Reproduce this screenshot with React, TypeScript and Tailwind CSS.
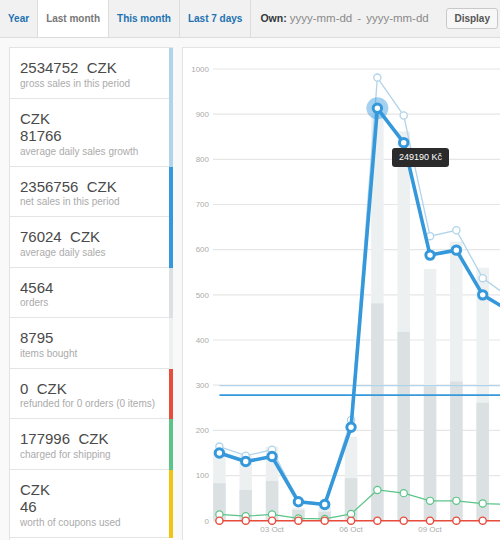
import React from "react";

const X0 = 219.4;
const DX = 26.33;
const Y0 = 520.7;
const K = 0.4517;

const px = (i: number) => X0 + DX * i;
const py = (v: number) => Y0 - v * K;

const itemsSold = [157, 145, 164, 28, 30, 186, 902, 862, 557, 618, 560];
const orders = [83, 68, 88, 24, 20, 94, 481, 418, 297, 308, 261];
const gross = [164, 144, 157, 44, 38, 223, 981, 897, 630, 643, 537, 495];
const net = [150, 131, 142, 42, 36, 207, 913, 837, 588, 599, 500, 465];
const shipping = [14, 10, 14, 5, 4, 15, 68, 61, 44, 44, 38, 36];
const refunds = [0, 0, 0, 0, 0, 0, 0, 0, 0, 0, 0, 0];

const toPoints = (vals: number[]) => vals.map((v, i) => `${px(i)},${py(v)}`).join(" ");

const legend = [
  { value: ["2534752\u00a0\u00a0CZK"], label: "gross sales in this period", color: "border-r-[#b1d4ea]" },
  { value: ["CZK", "81766"], label: "average daily sales growth", color: "border-r-[#b1d4ea]" },
  { value: ["2356756\u00a0\u00a0CZK"], label: "net sales in this period", color: "border-r-[#3498db]" },
  { value: ["76024\u00a0\u00a0CZK"], label: "average daily sales", color: "border-r-[#3498db]" },
  { value: ["4564"], label: "orders", color: "border-r-[#dbe1e3]" },
  { value: ["8795"], label: "items bought", color: "border-r-[#ecf0f1]" },
  { value: ["0\u00a0\u00a0CZK"], label: "refunded for 0 orders (0 items)", color: "border-r-[#e74c3c]" },
  { value: ["177996\u00a0\u00a0CZK"], label: "charged for shipping", color: "border-r-[#5cc488]" },
  { value: ["CZK", "46"], label: "worth of coupons used", color: "border-r-[#f1c40f]" },
];

function RangeTabs() {
  const tabs = ["Year", "Last month", "This month", "Last 7 days"];
  return (
    <div className="flex h-[38px] w-full items-stretch whitespace-nowrap border-b border-[#dcdcdc] bg-[#f1f1f1] font-['Liberation_Sans',Arial,sans-serif] text-[10px] font-bold">
      {tabs.map((t) => (
        <div
          key={t}
          className={
            t === "Last month"
              ? "flex shrink-0 items-center border-r border-[#dcdcdc] bg-white px-[8px] text-[#777]"
              : "flex shrink-0 items-center border-r border-[#dcdcdc] px-[8px] text-[#2271b1]"
          }
        >
          {t}
        </div>
      ))}
      <div className="flex min-w-0 flex-1 items-center pl-[9px] pr-[2px]">
        <span className="mr-[3px] text-[10.5px] text-[#32373c]">Own:</span>
        <span className="text-[11.5px] font-normal text-[#8a8a8a]">yyyy-mm-dd</span>
        <span className="mx-[5px] text-[11.5px] font-normal text-[#8a8a8a]">-</span>
        <span className="text-[11.5px] font-normal text-[#8a8a8a]">yyyy-mm-dd</span>
        <button className="ml-auto h-[21px] shrink-0 rounded-[3px] border border-[#c9c9c9] bg-[#f7f7f7] px-[7px] text-[10px] font-bold text-[#555]">
          Display
        </button>
      </div>
    </div>
  );
}

function Legend() {
  return (
    <ul className="w-[164px] shrink-0 border-l border-t border-[#e3e3e3] bg-white font-['Liberation_Sans',Arial,sans-serif]">
      {legend.map((item) => (
        <li
          key={item.label}
          className={`border-r-4 ${item.color} px-[10px] pb-[9px] pt-[11px] shadow-[inset_0_-1px_0_0_#e4e4e4]`}
        >
          {item.value.map((v) => (
            <div key={v} className="text-[15px] leading-[17.5px] text-[#4a4a4a]">
              {v}
            </div>
          ))}
          <div className="text-[10px] leading-[13px] text-[#ababab]">{item.label}</div>
        </li>
      ))}
    </ul>
  );
}

function Chart() {
  const ticks = [0, 100, 200, 300, 400, 500, 600, 700, 800, 900, 1000];
  return (
    <div className="relative flex-1 overflow-hidden border-l border-t border-[#e3e3e3] bg-white">
      <svg width={317} height={492} viewBox="183 48 317 492" className="block font-['Liberation_Sans',Arial,sans-serif]">
        {ticks.map((t) => (
          <g key={t}>
            <line x1={213} x2={500} y1={py(t)} y2={py(t)} stroke="#e6e6e6" strokeWidth={1.2} />
            <text x={209} y={py(t) + 2.8} textAnchor="end" fontSize={8} fill="#acacac">
              {t}
            </text>
          </g>
        ))}
        {itemsSold.map((v, i) => (
          <rect key={`a${i}`} x={px(i) - 6.25} y={py(v)} width={12.5} height={Y0 - py(v)} fill="#ecf0f1" />
        ))}
        {orders.map((v, i) => (
          <rect key={`b${i}`} x={px(i) - 6.25} y={py(v)} width={12.5} height={Y0 - py(v)} fill="#dbe1e3" />
        ))}
        {[
          ["03 Oct", 2],
          ["06 Oct", 5],
          ["09 Oct", 8],
        ].map(([l, i]) => (
          <text key={l} x={px(i as number)} y={532} textAnchor="middle" fontSize={8} fill="#acacac">
            {l}
          </text>
        ))}
        <line x1={X0} x2={500} y1={py(299)} y2={py(299)} stroke="#b1d4ea" strokeWidth={1.2} />
        <line x1={X0} x2={500} y1={py(278)} y2={py(278)} stroke="#3498db" strokeWidth={1.6} />

        <polyline points={toPoints(shipping)} fill="none" stroke="#5cc488" strokeWidth={1.2} />
        {shipping.map((v, i) => (
          <circle key={`s${i}`} cx={px(i)} cy={py(v)} r={3.6} fill="#fff" stroke="#5cc488" strokeWidth={1.2} />
        ))}
        <polyline points={toPoints(refunds)} fill="none" stroke="#e74c3c" strokeWidth={1.5} />
        {refunds.map((v, i) => (
          <circle key={`r${i}`} cx={px(i)} cy={py(v)} r={3.6} fill="#fff" stroke="#e74c3c" strokeWidth={1.4} />
        ))}
        <polyline points={toPoints(gross)} fill="none" stroke="#b1d4ea" strokeWidth={1.3} />
        {gross.map((v, i) => (
          <circle key={`g${i}`} cx={px(i)} cy={py(v)} r={3.6} fill="#fff" stroke="#b1d4ea" strokeWidth={1.3} />
        ))}
        <polyline points={toPoints(net)} fill="none" stroke="#3498db" strokeWidth={3.6} strokeLinejoin="round" />
        <circle cx={px(6)} cy={py(913)} r={11} fill="rgba(52,152,219,0.45)" />
        {net.map((v, i) => (
          <circle key={`n${i}`} cx={px(i)} cy={py(v)} r={4.2} fill="#fff" stroke="#3498db" strokeWidth={3} />
        ))}
      </svg>
      <div className="absolute left-[209px] top-[100px] flex h-[19px] w-[57px] items-center justify-center rounded-[3px] bg-[#2b2b2b] font-['Liberation_Sans',Arial,sans-serif] text-[9px] text-white">
        249190 Kč
      </div>
    </div>
  );
}

export default function App() {
  return (
    <div className="h-[540px] w-[500px] overflow-hidden bg-[#f9f9f9]">
      <RangeTabs />
      <div className="flex gap-[9px] pl-[9px] pt-[9px]">
        <Legend />
        <Chart />
      </div>
    </div>
  );
}
